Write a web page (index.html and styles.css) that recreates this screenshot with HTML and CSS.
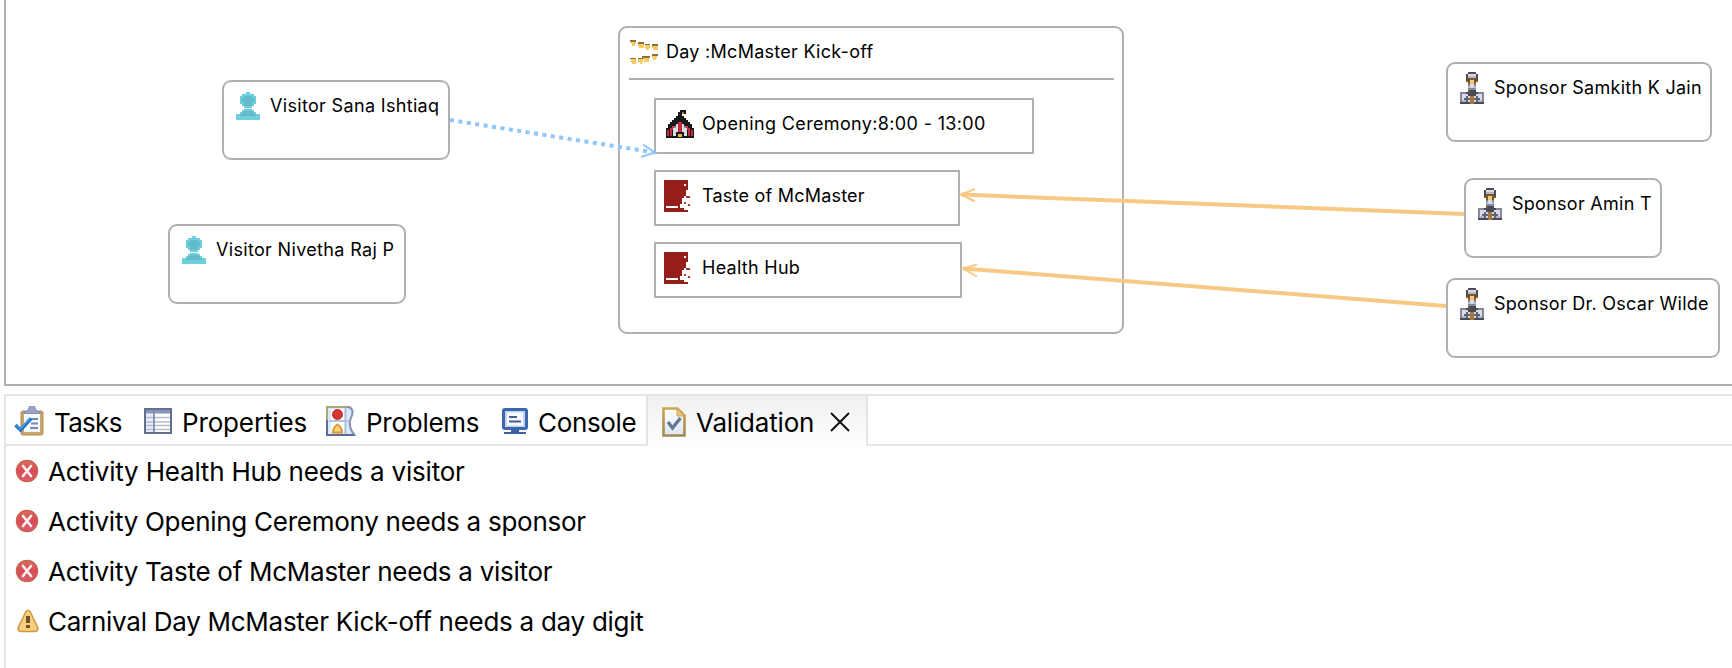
FILE: index.html
```
<!DOCTYPE html>
<html lang="en">
<head>
<meta charset="utf-8">
<title>Carnival</title>
<link rel="stylesheet" href="styles.css">
</head>
<body>
<svg class="defs" aria-hidden="true">
  <defs>
    <linearGradient id="frameGold" x1="0" y1="0" x2="0" y2="1"><stop offset="0" stop-color="#cfa64e"/><stop offset="1" stop-color="#a08a50"/></linearGradient>
    <linearGradient id="paper" x1="0" y1="0" x2="0" y2="1"><stop offset="0" stop-color="#fff"/><stop offset="1" stop-color="#dde6f6"/></linearGradient>
    <linearGradient id="err" x1="0" y1="0" x2="0" y2="1"><stop offset="0" stop-color="#d9705f"/><stop offset=".5" stop-color="#d94b55"/><stop offset="1" stop-color="#dc5f6c"/></linearGradient>
    <symbol id="visitor" viewBox="0 0 12 14">
      <path fill="#6fd0dd" d="M5 0h2v1h2v1h1v4h-1v1h-1v1h-4v-1h-1v-1h-1v-4h1v-1h2zM4 8.500h4v.5h1v1h1v1h2v3h-12v-3h2v-1h1v-1h1z"/>
      <path fill="#63bcc9" d="M4 2h4v1h1v2h-1v2h-4v-2h-1v-2h1zM4 9.500h4v.5h1v1h1v1h-8v-1h1v-1h1z"/>
    </symbol>
    <symbol id="sponsor" viewBox="0 0 12 16">
      <path fill="#4a4b57" d="M4 0h4v1h1v3h-1v-2h-4v2h-1v-3h1zM4 9h4v1h1v1h-1v1h-4v-1h-1v-1h1zM0 15h12v1h-12z"/>
      <path fill="#85889a" d="M0 10h3v1h-2v4h-1zM9 10h3v5h-1v-4h-2zM4 6h4v1h-4zM4 8h4v1h-4zM4 12h4v3h-4z"/>
      <path fill="#d9dbe6" d="M4 1h4v2h-4zM5 6h2v2h-2zM1 11h3v1h1v3h-4zM8 11h3v4h-4v-3h1z"/>
      <path fill="#b3b6c6" d="M4 2h4v1h-4zM1 14h2v1h-2zM9 14h2v1h-2zM4 7h1v1h-1zM7 7h1v1h-1z"/>
      <path fill="#7a552e" d="M4 3h4v1h1v1h-1v1h-1v-2h-2v2h-1v-1h-1v-1h1zM4 9h1v1h-1z"/>
      <path fill="#f0cb78" d="M5 4h2v2h-2z"/>
      <path fill="#a37a42" d="M5 12h2v4h-2z"/>
      <path fill="#62646f" d="M2 13h3v1h-3zM7 13h3v1h-3zM3 12h1v1h-1zM8 12h1v1h-1zM3 14h1v1h-1zM8 14h1v1h-1z"/>
    </symbol>
    <symbol id="bunting" viewBox="0 0 28 24">
      <path fill="#8a7140" d="M0 0h6v2h-6zM8 2h6v2h-6zM15 4h5v1h-5zM22 4h6v2h-6zM0 18h6v1h-6zM8 18h5v1h-5zM12 16h8v2h-8zM22 14h6v2h-6z"/>
      <path fill="#f8cb62" d="M1 2h5v2h-1v2h-3v-2h-1zM8 4h6v4h-5v-2h-1zM15 5h5v3h-1v2h-3v-2h-1zM22 6h6v4h-5v-2h-1zM1 19h5v5h-4v-2h-1zM8 19h5v3h-1v2h-2v-2h-2zM13 18h6v4h-5v-2h-1zM22 16h5v2h-1v2h-3v-2h-1z"/>
    </symbol>
    <symbol id="tent" viewBox="0 0 14 14">
      <path fill="#17161b" d="M6 1h1v-1h3v2h-2v1h1v1h1v1h1v1h1v1h1v2h1v5h-14v-5h1v-2h1v-1h1v-1h1v-1h1v-1h1z"/>
      <path fill="#9d7d42" d="M8 1h1v1h-1z"/>
      <path fill="#c9283c" d="M6 6h2v5h-2zM3 8h1v2h-1v3h-1v-4h1zM10 8h1v1h1v4h-1v-3h-1zM.5 10h1v3h-1zM12.500 10h1v3h-1z"/>
      <path fill="#dcdde3" d="M5 7h1v4h-1v2h-1.500v-4h1.500zM8 7h1v2h1.500v4h-1.500v-2h-1z"/>
      <path fill="#8a8b95" d="M4 8h1v1h-1zM9 8h1v1h-1z"/>
      <path fill="#e9b83c" d="M6 12h2v1.400h-2z"/>
    </symbol>
    <symbol id="food" viewBox="0 0 26 32">
      <path fill="#962019" d="M0 0h24v10h-2v6h-2v2h-2v6h-2v4h4v2h4v2h-24z"/>
      <path fill="#fff" d="M20 4h2v2h-2zM2 26h12v2h-12z"/>
      <path fill="#a8322b" d="M22 16h4v2h-4zM20 22h2v2h-2zM24 24h2v2h-2z"/>
    </symbol>
    <symbol id="error" viewBox="0 0 24 24">
      <circle cx="12" cy="12" r="10.600" fill="url(#err)" stroke="#c4614f" stroke-width="1.200"/>
      <path d="M8 7l8 10M16 7l-8 10" stroke="#fff" stroke-width="2.600" stroke-linecap="round" opacity=".92"/>
    </symbol>
  </defs>
</svg>

<main class="canvas">
  <section class="node visitor v1"><svg class="ico-visitor"><use href="#visitor"/></svg><span>Visitor Sana Ishtiaq</span></section>
  <section class="node visitor v2"><svg class="ico-visitor"><use href="#visitor"/></svg><span>Visitor Nivetha Raj P</span></section>

  <section class="day">
    <header class="day-head"><svg class="ico-bunting"><use href="#bunting"/></svg><span>Day :McMaster Kick-off</span></header>
    <div class="activities">
      <div class="activity opening"><svg class="ico-tent"><use href="#tent"/></svg><span>Opening Ceremony:8:00 - 13:00</span></div>
      <div class="activity taste"><svg class="ico-food"><use href="#food"/></svg><span>Taste of McMaster</span></div>
      <div class="activity health"><svg class="ico-food"><use href="#food"/></svg><span>Health Hub</span></div>
    </div>
  </section>

  <section class="node sponsor s1"><svg class="ico-sponsor"><use href="#sponsor"/></svg><span>Sponsor Samkith K Jain</span></section>
  <section class="node sponsor s2"><svg class="ico-sponsor"><use href="#sponsor"/></svg><span>Sponsor Amin T</span></section>
  <section class="node sponsor s3"><svg class="ico-sponsor"><use href="#sponsor"/></svg><span>Sponsor Dr. Oscar Wilde</span></section>

  <svg class="edges" viewBox="0 0 1732 384" fill="none">
    <g stroke="#90c6fc">
      <path d="M450 120L655 152.500" stroke-width="4" stroke-dasharray="4.100 4.400"/>
      <path d="M643 144.500L655 152.500L641 157" stroke-width="2"/>
    </g>
    <g stroke="#f7c985">
      <path d="M1464 214L961 194.500M1446 306L963 268.500" stroke-width="4"/>
      <path d="M975 189L961 194.500L975 201.500M977 264.500L963 268.500L977 276.500" stroke-width="2"/>
    </g>
  </svg>
</main>

<section class="panel">
  <nav class="tabs">
    <div class="tab t-tasks">
      <svg width="30" height="30" viewBox="0 0 30 30"><rect x="7" y="5" width="22" height="24" rx="2" fill="#c9a56c" stroke="#b08b53"/><path d="M10 8h16v18h-16z" fill="#f6f9ff"/><path d="M10 7.500v-2h3l1.500-2.500a3.500 3.500 0 0 1 7 0l1.500 2.500h3v2z" fill="#99a5c3" stroke="#7f8cad"/><path d="M17 13h7M17 17.500h7M16 22h8" stroke="#7589b4" stroke-width="2"/><path d="M1.500 19l5 5L17 12.500" fill="none" stroke="#1f6fc4" stroke-width="3.600"/><path d="M2 19l4.500 4L16 12.500" fill="none" stroke="#4aa3ec" stroke-width="1.200"/></svg>
      <span>Tasks</span>
    </div>
    <div class="tab t-properties">
      <svg width="28" height="26" viewBox="0 0 28 26"><path d="M1 1h26v24h-26z" fill="#fff" stroke="#63708f" stroke-width="2"/><path d="M2 2h24v3.500h-24z" fill="#8696bb"/><path d="M2 6h7.500v18h-7.500z" fill="#e6ecf7"/><path d="M2 9.500h24M2 14h24M2 17.500h24M2 21.500h24" stroke="#b6bccb" stroke-width="1.400"/><path d="M10 2v22" stroke="#7787ab" stroke-width="1.600"/></svg>
      <span>Properties</span>
    </div>
    <div class="tab t-problems">
      <svg width="30" height="30" viewBox="0 0 30 30"><path d="M1 1h22c6 3 3 8 1.500 12c-1.500 5-1 10 4 16h-27.500z" fill="#dce9f8" stroke="#8793b5" stroke-width="2"/><path d="M1 29v-28h20" fill="none" stroke="#a8a878" stroke-width="2"/><path d="M1 14v15h27" fill="none" stroke="#606c97" stroke-width="2"/><path d="M5 3h13v11h-13zM5 16h13v11h-13z" fill="#fff"/><path d="M3 15h21M19.500 2v26" stroke="#a3b9dc" stroke-width="1.500"/><circle cx="11.500" cy="8.500" r="5" fill="#d7352f" stroke="#b92c2c"/><path d="M11.500 18.500c2.500 1.500 4.500 4 4.500 8h-9c0-4 2-6.500 4.500-8z" fill="#fbd778" stroke="#dd9434" stroke-width="2"/></svg>
      <span>Problems</span>
    </div>
    <div class="tab t-console">
      <svg width="26" height="26" viewBox="0 0 26 26"><rect x="1.500" y="1.500" width="23" height="19" rx="1.500" fill="#c5d3ed" stroke="#3d67ad" stroke-width="3"/><path d="M5 4.500h16v13h-16z" fill="#f8fbff"/><path d="M7 9h8M7 13.500h12" stroke="#485b93" stroke-width="1.800"/><path d="M9 22h8v2h7v2h-22v-2h7z" fill="#3d62a6"/></svg>
      <span>Console</span>
    </div>
    <div class="tab active">
      <svg width="24" height="30" viewBox="0 0 24 30"><path d="M1.500 1.500h14l7 7v20h-21z" fill="url(#paper)" stroke="url(#frameGold)" stroke-width="2.600"/><path d="M15 1.500v7.500h7.500z" fill="#e7c785" stroke="#c9a55c"/><path d="M6 15l4.500 6L18.500 11" fill="none" stroke="#667897" stroke-width="3.400"/></svg>
      <span>Validation</span>
      <svg class="close" width="20" height="20" viewBox="0 0 20 20"><path d="M1 1l18 18M19 1L1 19" stroke="#111" stroke-width="2"/></svg>
    </div>
    <div class="rest"></div>
  </nav>
  <ul class="list">
    <li><svg><use href="#error"/></svg><span class="first">Activity Health Hub needs a visitor</span></li>
    <li><svg><use href="#error"/></svg><span>Activity Opening Ceremony needs a sponsor</span></li>
    <li><svg><use href="#error"/></svg><span>Activity Taste of McMaster needs a visitor</span></li>
    <li><svg viewBox="0 0 24 24"><path d="M13 1.500c2 0 2.500 1 3 3l6.500 13.500c.8 2.500 0 4.500-2 4.500h-15c-2 0-2.800-2-2-4.500l6.500-13.500c.5-2 1-3 3-3z" fill="#f8cf7c" stroke="#d09b48" stroke-width="1.600"/><path d="M11 7h4v7h-4zM11 16h4v3h-4z" fill="#6e5228"/></svg><span>Carnival Day McMaster Kick-off needs a day digit</span></li>
  </ul>
</section>
</body>
</html>
```
FILE: styles.css
```
* { box-sizing: border-box; }
body {
  margin: 0;
  width: 1732px;
  height: 668px;
  overflow: hidden;
  background: #fff;
  color: #000;
  font-family: Inter, "Liberation Sans", sans-serif;
  display: flex;
  flex-direction: column;
  padding-left: 4px;
}
svg { display: block; flex: none; }
.defs { position: absolute; width: 0; height: 0; }

/* diagram canvas */
.canvas {
  position: relative;
  flex: none;
  height: 386px;
  border-left: 2px solid #b0b0b0;
  border-bottom: 2px solid #b0b0b0;
  font-size: 18px;
  line-height: 24px;
  letter-spacing: 0.27px;
  white-space: nowrap;
}
.edges { position: absolute; left: -6px; top: 0; width: 1732px; height: 384px; }
.node {
  position: absolute;
  height: 80px;
  border: 2px solid #b0b0b0;
  border-radius: 9px;
  background: #fff;
  display: flex;
  align-items: flex-start;
  gap: 10px;
  padding: 8px 0 0 12px;
}
.node span { margin-top: 4px; }
.visitor { letter-spacing: 0.33px; }
.v1 { left: 216px; top: 80px; width: 228px; }
.v2 { left: 162px; top: 224px; width: 238px; }
.s1 { left: 1440px; top: 62px; width: 266px; }
.s2 { left: 1458px; top: 178px; width: 198px; }
.s3 { left: 1440px; top: 278px; width: 274px; }
.ico-visitor { width: 24px; height: 28px; margin-top: 2px; }
.ico-sponsor { width: 24px; height: 32px; }
.ico-visitor, .ico-sponsor, .ico-bunting, .ico-tent, .ico-food { shape-rendering: crispEdges; }

.day {
  position: absolute;
  left: 612px;
  top: 26px;
  width: 506px;
  height: 308px;
  border: 2px solid #b0b0b0;
  border-radius: 9px;
  padding: 0 8px 0 9px;
}
.day-head {
  height: 52px;
  border-bottom: 2px solid #b0b0b0;
  display: flex;
  align-items: flex-start;
  gap: 8px;
  padding: 12px 0 0 1px;
}
.ico-bunting { width: 28px; height: 24px; }
.activities {
  display: flex;
  flex-direction: column;
  gap: 16px;
  padding: 18px 0 0 25px;
}
.activity {
  height: 56px;
  border: 2px solid #b0b0b0;
  display: flex;
  align-items: flex-start;
  padding: 8px 0 0 8px;
}
.activity span { margin-top: 4px; }
.opening { width: 380px; letter-spacing: 0.35px; }
.taste { width: 306px; letter-spacing: 0.22px; }
.health { width: 308px; }
.ico-tent { width: 28px; height: 28px; margin: 2px 8px 0 2px; }
.ico-food { width: 26px; height: 32px; margin-right: 12px; }

/* bottom view stack */
.panel {
  flex: 1;
  margin-top: 8px;
  border-left: 2px solid #e4e4e4;
  border-top: 2px solid #e4e4e4;
  font-size: 26px;
  letter-spacing: -0.27px;
  white-space: nowrap;
}
.tabs { display: flex; height: 50px; }
.tab {
  display: flex;
  align-items: center;
  border-bottom: 2px solid #e4e4e4;
  line-height: 32px;
}
.tab span { margin-top: 5px; }
.tab svg { margin-top: 2px; }
.t-tasks { width: 130px; padding-left: 8px; gap: 10px; letter-spacing: -0.7px; }
.t-properties { width: 180px; padding-left: 8px; gap: 10px; letter-spacing: -0.15px; }
.t-problems { width: 178px; padding-left: 10px; gap: 10px; }
.t-console { width: 152px; padding-left: 8px; gap: 10px; letter-spacing: -0.35px; }
.active {
  width: 222px;
  padding-left: 14px;
  gap: 10px;
  border: solid #e4e4e4;
  border-width: 0 2px;
  background: linear-gradient(#f0f0f0, #fff);
  letter-spacing: -0.18px;
}
.active span { margin-top: 3px; }
.active .close { margin-left: 6px; }
.rest { flex: 1; border-bottom: 2px solid #e4e4e4; }
.list { list-style: none; margin: 0; padding: 0 0 0 9px; }
.list li { display: flex; align-items: center; gap: 9px; height: 50px; }
.list .first { letter-spacing: -0.2px; }
.list svg { width: 24px; height: 24px; }
```
